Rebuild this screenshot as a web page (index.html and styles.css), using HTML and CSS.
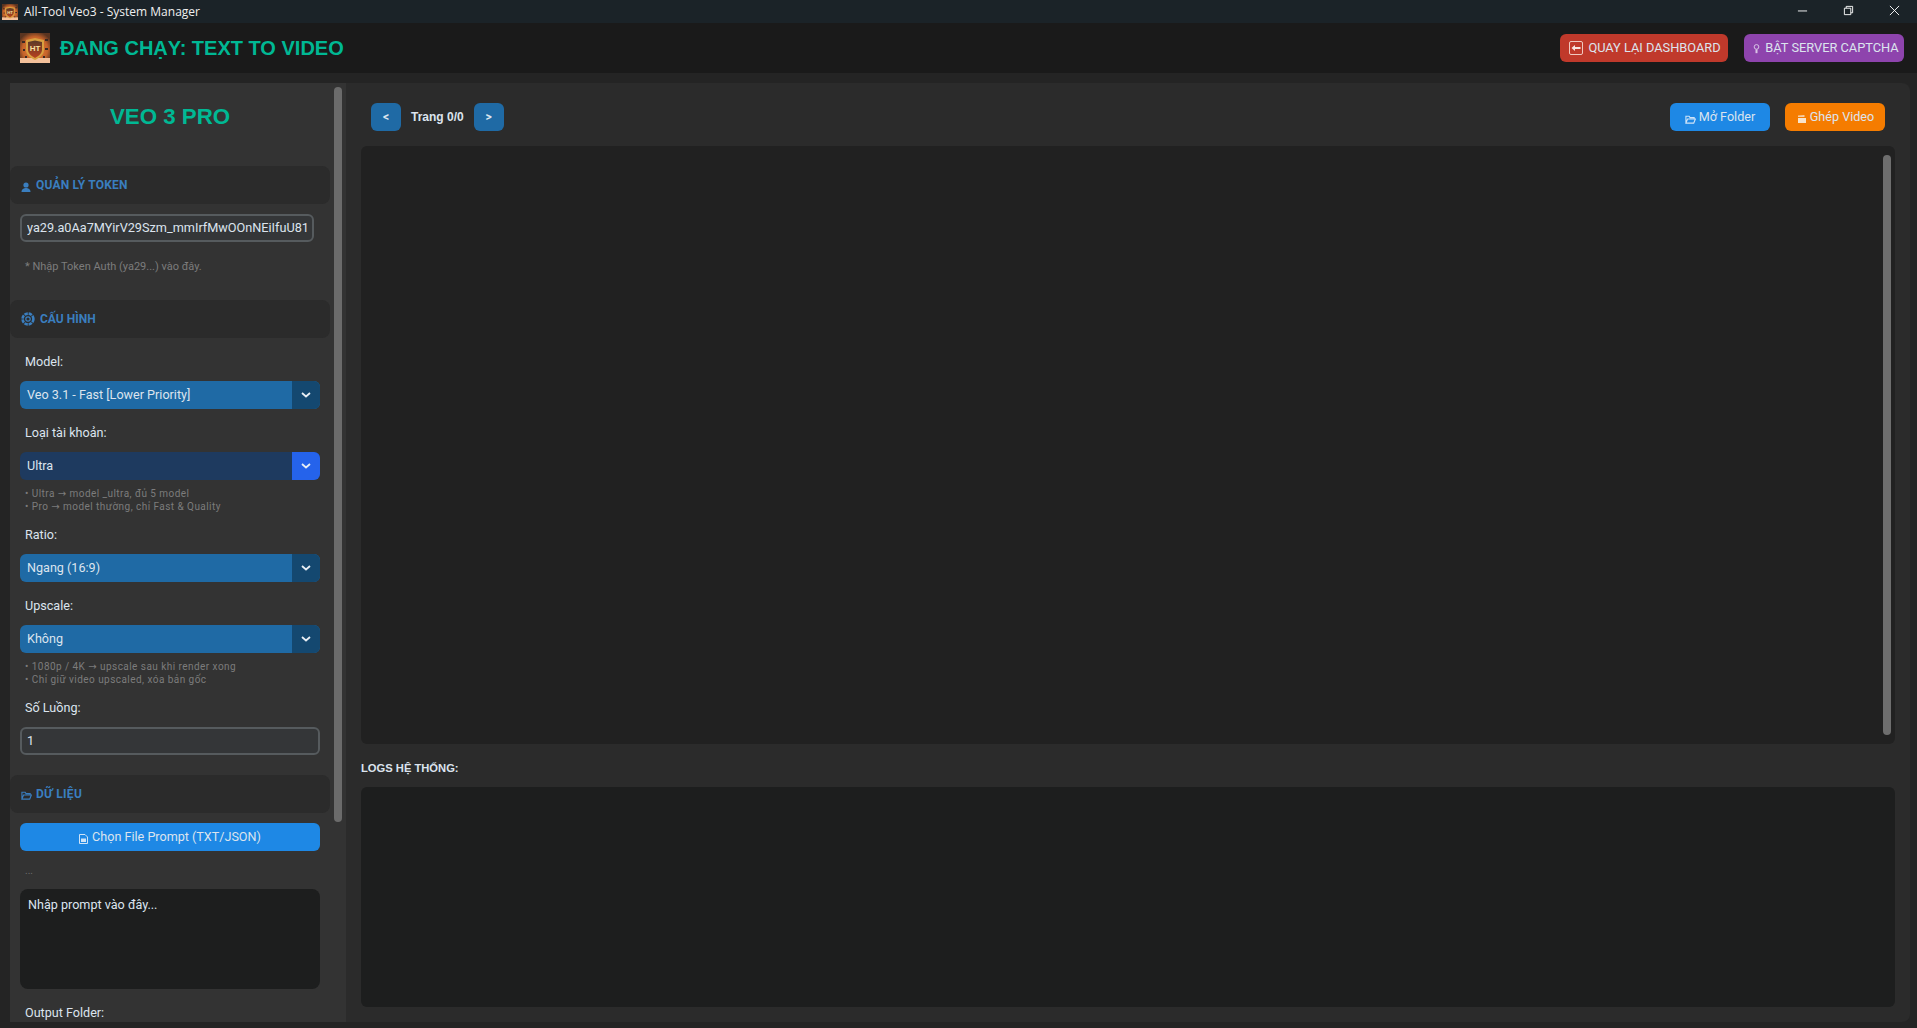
FILE: index.html
```html
<!DOCTYPE html>
<html lang="vi">
<head>
    <meta charset="UTF-8">
    <title>All-Tool Veo3 - System Manager</title>
    <link rel="stylesheet" href="styles.css">
</head>
<body>
    <!-- thanh tieu de cua so -->
    <div class="titlebar">
        <svg class="logo-small" viewBox="0 0 30 30"><use href="#logo"/></svg>
        <span class="titlebar-text">All-Tool Veo3 - System Manager</span>
        <div class="win-btns">
            <svg viewBox="0 0 12 12"><path d="M1 6.500H11" stroke="#fff" fill="none"/></svg>
            <svg viewBox="0 0 12 12"><path d="M1.500 3.500H8.500V10.500H1.500ZM3.500 3.500V1.500H10.500V8.500H8.500" stroke="#fff" fill="none"/></svg>
            <svg viewBox="0 0 12 12"><path d="M1 1L11 11M11 1L1 11" stroke="#fff" fill="none"/></svg>
        </div>
    </div>

    <svg class="defs" width="0" height="0">
        <defs>
            <radialGradient id="glow" cx="50%" cy="55%" r="60%">
                <stop offset="0" stop-color="#f08a3c"/>
                <stop offset="0.7" stop-color="#c4622a"/>
                <stop offset="1" stop-color="#5a3420"/>
            </radialGradient>
            <linearGradient id="shield" x1="0" y1="0" x2="0" y2="1">
                <stop offset="0" stop-color="#5a3a28"/>
                <stop offset="1" stop-color="#b8401f"/>
            </linearGradient>
        </defs>
        <symbol id="logo" viewBox="0 0 30 30">
            <rect width="30" height="30" fill="url(#glow)"/>
            <rect y="25" width="30" height="5" fill="#f3c09a"/>
            <path d="M6 7L15 5L24 7V17C24 22 19 25 15 27C11 25 6 22 6 17Z" fill="#d8a040"/>
            <path d="M8 9L15 7.500L22 9V17C22 20.500 18 23.500 15 25C12 23.500 8 20.500 8 17Z" fill="url(#shield)"/>
            <text x="15" y="18" text-anchor="middle" class="logo-text">HT</text>
            <g fill="#3a2a24">
                <rect x="2" y="8" width="3" height="2"/>
                <rect x="25" y="6" width="3" height="2"/>
                <rect x="3" y="16" width="2" height="2"/>
                <rect x="25" y="15" width="3" height="2"/>
                <rect x="5" y="23" width="2" height="2"/>
                <rect x="23" y="23" width="2" height="2"/>
            </g>
        </symbol>
        <symbol id="folder" viewBox="0 0 12 12">
            <path d="M1 10V2.500H4.500L5.500 4H10V5.500M1 10L2.800 5.500H11.300L9.500 10Z" fill="none" stroke="currentColor" stroke-width="1.200"/>
        </symbol>
    </svg>

    <header class="topbar">
        <div class="topbar-left">
            <svg class="logo-big" viewBox="0 0 30 30"><use href="#logo"/></svg>
            <h1>ĐANG CHẠY: TEXT TO VIDEO</h1>
        </div>
        <div class="topbar-right">
            <a href="#" class="btn btn-back">
                <svg class="ico-back" viewBox="0 0 14 14"><rect x="0.500" y="0.500" width="13" height="13" rx="1.500" fill="none" stroke="#f0c8c0"/><path d="M2.500 7L6 4V6H11.500V8H6V10Z" fill="#f8e4e0"/></svg>
                QUAY LẠI DASHBOARD
            </a>
            <a href="#" class="btn btn-captcha">
                <svg class="ico-small" viewBox="0 0 8 12"><circle cx="4" cy="3.500" r="2.800" fill="none" stroke="#d8c4e6" stroke-width="1.200"/><rect x="2.800" y="6.500" width="2.400" height="4.500" fill="#d8c4e6"/></svg>
                BẬT SERVER CAPTCHA
            </a>
        </div>
    </header>

    <div class="content">
        <aside class="sidebar">
            <div class="sidebar-inner">
                <h2 class="brand">VEO 3 PRO</h2>

                <div class="sec-head sec-token">
                    <svg class="sec-ico" viewBox="0 0 10 10"><circle cx="5" cy="3" r="2.600" fill="currentColor"/><path d="M0.500 10C0.500 7 3 6 5 6C7 6 9.500 7 9.500 10Z" fill="currentColor"/></svg>
                    QUẢN LÝ TOKEN
                </div>
                <input class="field field-token" value="ya29.a0Aa7MYirV29Szm_mmIrfMwOOnNEiIfuU81">
                <p class="hint hint-token">* Nhập Token Auth (ya29...) vào đây.</p>

                <div class="sec-head sec-config">
                    <svg class="sec-ico-big" viewBox="0 0 14 14"><g fill="none" stroke="currentColor"><circle cx="7" cy="7" r="5.400" stroke-width="2.600" stroke-dasharray="3.400 0.840"/><circle cx="7" cy="7" r="2.200" stroke-width="1.200"/></g></svg>
                    CẤU HÌNH
                </div>

                <label class="lbl">Model:</label>
                <div class="select">
                    <span class="select-val">Veo 3.1 - Fast [Lower Priority]</span>
                    <span class="select-arrow"><svg viewBox="0 0 10 6"><path d="M1 1L5 4.500L9 1" fill="none" stroke="#e8eef4" stroke-width="1.800"/></svg></span>
                </div>

                <label class="lbl">Loại tài khoản:</label>
                <div class="select select-dark">
                    <span class="select-val">Ultra</span>
                    <span class="select-arrow"><svg viewBox="0 0 10 6"><path d="M1 1L5 4.500L9 1" fill="none" stroke="#e8eef4" stroke-width="1.800"/></svg></span>
                </div>
                <p class="hint">• Ultra → model _ultra, đủ 5 model<br>• Pro → model thường, chỉ Fast &amp; Quality</p>

                <label class="lbl lbl-after-hint">Ratio:</label>
                <div class="select">
                    <span class="select-val">Ngang (16:9)</span>
                    <span class="select-arrow"><svg viewBox="0 0 10 6"><path d="M1 1L5 4.500L9 1" fill="none" stroke="#e8eef4" stroke-width="1.800"/></svg></span>
                </div>

                <label class="lbl">Upscale:</label>
                <div class="select">
                    <span class="select-val">Không</span>
                    <span class="select-arrow"><svg viewBox="0 0 10 6"><path d="M1 1L5 4.500L9 1" fill="none" stroke="#e8eef4" stroke-width="1.800"/></svg></span>
                </div>
                <p class="hint">• 1080p / 4K → upscale sau khi render xong<br>• Chỉ giữ video upscaled, xóa bản gốc</p>

                <label class="lbl lbl-after-hint">Số Luồng:</label>
                <input class="field field-num" value="1">

                <div class="sec-head sec-data">
                    <svg class="sec-ico-folder"><use href="#folder"/></svg>
                    DỮ LIỆU
                </div>
                <a href="#" class="btn btn-file">
                    <svg class="ico-file" viewBox="0 0 9 10"><path d="M0.500 0.500H6L8.500 3V9.500H0.500Z" fill="none" stroke="#cfe3f7"/><path d="M2 4.500H7V8H2Z" fill="#cfe3f7"/></svg>
                    Chọn File Prompt (TXT/JSON)
                </a>
                <p class="dots">...</p>
                <textarea class="prompt">Nhập prompt vào đây...</textarea>
                <label class="lbl lbl-output">Output Folder:</label>
            </div>
            <div class="scroll-thumb side-thumb"></div>
        </aside>

        <main class="main">
            <div class="toolbar">
                <a href="#" class="btn btn-page">&lt;</a>
                <span class="page-text">Trang 0/0</span>
                <a href="#" class="btn btn-page">&gt;</a>
                <div class="toolbar-right">
                    <a href="#" class="btn btn-folder">
                        <svg class="ico-folder"><use href="#folder"/></svg>
                        Mở Folder
                    </a>
                    <a href="#" class="btn btn-merge">
                        <svg class="ico-clap" viewBox="0 0 8 8"><path d="M0 3H8V8H0Z" fill="#f8e4cc"/><path d="M0 0.500L6.500 0V2H0Z" fill="#f8e4cc" opacity="0.800"/></svg>
                        Ghép Video
                    </a>
                </div>
            </div>
            <div class="video-box">
                <div class="scroll-thumb video-thumb"></div>
            </div>
            <div class="logs-title">LOGS HỆ THỐNG:</div>
            <div class="logs-box"></div>
        </main>
    </div>
</body>
</html>
```

FILE: styles.css
```css
/* reset */
* {box-sizing: border-box;}
html, body {height: 100%;}
body, h1, h2, p {margin: 0; padding: 0;}
a {text-decoration: none; color: inherit;}
body {
    display: flex; flex-direction: column;
    overflow: hidden;
    background: #242424; color: #dce4ee;
    font-family: Roboto, "Liberation Sans", sans-serif;
}
.defs {position: absolute;}
.logo-text {font: bold 8px "Liberation Sans", sans-serif; fill: #f8e0a0;}

/* title bar */
.titlebar {
    display: flex; align-items: center; flex: none;
    height: 23px; padding-left: 2px;
    background: #1b2328; color: #f0f0f0;
}
.logo-small {width: 16px; height: 16px; margin-right: 6px;}
.titlebar-text {font: 12px "Open Sans", sans-serif;}
.win-btns {display: flex; align-items: center; margin-left: auto; padding: 0 17px 3px 0; gap: 35px;}
.win-btns svg {width: 11px; height: 11px; display: block;}

/* header */
.topbar {
    display: flex; justify-content: space-between; align-items: center; flex: none;
    height: 50px; padding: 0 13px 0 20px;
    background: #1a1a1a;
}
.topbar-left {display: flex; align-items: center;}
.logo-big {width: 30px; height: 30px; margin-right: 10px;}
.topbar h1 {font: bold 20px "Liberation Sans", sans-serif; color: #00b894;}
.topbar-right {display: flex; gap: 16px;}

/* buttons */
.btn {
    display: flex; align-items: center; justify-content: center;
    height: 28px; padding-bottom: 1px; border-radius: 6px;
    font-size: 12.600px; color: #dce4ee; white-space: nowrap;
}
.btn-back {width: 168px; padding-left: 2px; background: #c0392b; font-size: 12.800px;}
.btn-captcha {width: 160px; padding-left: 4px; background: #8e44ad; font-size: 12.800px;}
.ico-back {width: 14px; height: 14px; margin-right: 5px;}
.ico-small {width: 7px; height: 10px; margin: 3px 5px 0 0;}

/* content */
.content {display: flex; flex: 1; min-height: 0; padding: 10px 7px 6px 10px;}

/* sidebar */
.sidebar {position: relative; width: 336px; flex: none; background: #333; overflow: hidden;}
.sidebar-inner {width: 320px;}
.brand {
    height: 83px; padding-top: 17px;
    font: bold 22.300px/34px "Liberation Sans", sans-serif;
    color: #00b894; text-align: center;
}
.sec-head {
    display: flex; align-items: center;
    height: 38px; padding-left: 11px;
    background: #2b2b2b; border-radius: 8px;
    font-size: 12px; font-weight: 700; color: #3a7ebf;
}
.sec-ico {width: 10px; height: 10px; margin: 3px 5px 0 0;}
.sec-token {letter-spacing: 0.200px;}
.sec-data {letter-spacing: 0.300px;}
.sec-ico-big {width: 14px; height: 14px; margin-right: 5px;}
.sec-ico-folder {width: 11px; height: 11px; margin: 3px 4px 0 0;}
.field {
    display: block; margin-left: 10px; padding: 0 5px 2px;
    height: 28px; background: #343638;
    border: 2px solid #565b5e; border-radius: 6px;
    font: 12.600px Roboto, sans-serif; color: #dce4ee; outline: none;
}
.field-token {width: 294px; margin-top: 10px; font-size: 12.700px;}
.field-num {width: 300px; margin-top: 11px;}
.hint {margin: 7px 0 0 15px; font-family: Roboto, "DejaVu Sans", sans-serif; font-size: 10px; line-height: 13px; letter-spacing: 0.450px; color: #7c7c7c;}
.hint-token {height: 40px; margin-top: 18px; font-size: 11px; letter-spacing: 0;}
.lbl {display: block; margin: 16px 0 11px 15px; font-size: 12.600px; line-height: 16px; color: #dce4ee;}
.lbl-after-hint {margin-top: 14px;}
.select {
    display: flex; width: 300px; height: 28px; margin-left: 10px;
    background: #1f6aa5; border-radius: 6px; overflow: hidden;
    font-size: 12.600px; color: #dce4ee;
}
.select-val {flex: 1; padding-left: 7px; line-height: 27px;}
.select-arrow {display: flex; align-items: center; justify-content: center; width: 28px; background: #144870;}
.select-arrow svg {width: 10px; height: 6px;}
.select-dark {background: #1e3a5f;}
.select-dark .select-arrow {background: #2563eb;}
.sec-data {margin-top: 20px;}
.btn-file {width: 300px; margin: 10px 0 0 10px; padding-bottom: 2px; background: #1e88e5;}
.ico-file {width: 9px; height: 10px; margin: 5px 4px 0 0;}
.dots {height: 38px; padding: 13px 0 0 15px; font-size: 10px; line-height: 13px; color: #6e6e6e;}
.prompt {
    display: block; width: 300px; height: 100px; margin-left: 10px; padding: 7px 8px;
    background: #1d1e1e; border: 0; border-radius: 8px; resize: none; outline: none;
    font: 12.600px/18px Roboto, sans-serif; color: #dce4ee;
}

/* thanh cuon */
.scroll-thumb {position: absolute; width: 8px; border-radius: 4px; background: #6b6b6b;}
.side-thumb {top: 4px; right: 4px; height: 735px;}
.video-thumb {top: 9px; right: 4px; height: 580px; background: #6e6e6e;}

/* main */
.main {
    display: flex; flex-direction: column; flex: 1; min-width: 0;
    padding: 0 15px 15px;
    background: #2b2b2b; border-radius: 0 8px 8px 0;
}
.toolbar {display: flex; align-items: center; flex: none; height: 63px; padding: 5px 10px 0;}
.btn-page {width: 30px; background: #1f6aa5; font-weight: 700; font-size: 12px;}
.page-text {margin: 0 10px; font: bold 12px "Liberation Sans", sans-serif; color: #dce4ee;}
.toolbar-right {display: flex; gap: 15px; margin-left: auto;}
.btn-folder {width: 100px; background: #1e88e5;}
.btn-merge {width: 100px; padding-left: 2px; background: #f57c00;}
.ico-folder {width: 11px; height: 11px; margin: 5px 3px 0 0; color: #cfe3f7;}
.ico-clap {width: 8px; height: 8px; margin: 4px 4px 0 0;}
.video-box {position: relative; flex: none; height: 598px; background: #212121; border-radius: 6px;}
.logs-title {flex: none; height: 43px; padding-top: 17px; font: bold 11.200px/15px "Liberation Sans", sans-serif; color: #dce4ee;}
.logs-box {flex: 1; background: #1d1e1e; border-radius: 6px;}
```
